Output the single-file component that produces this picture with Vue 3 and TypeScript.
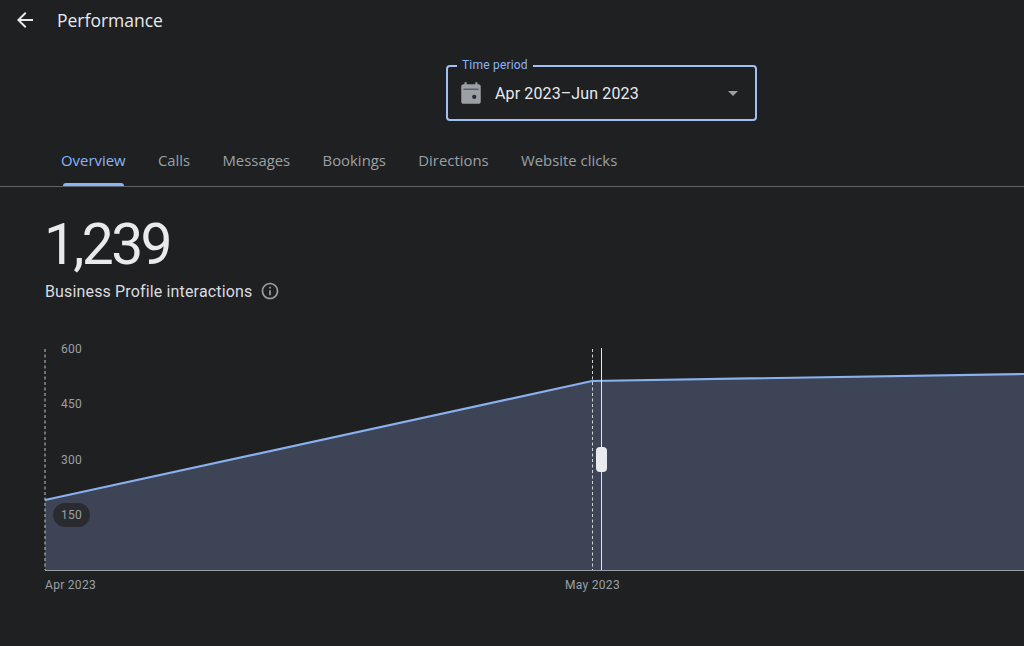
<script setup lang="ts">
const tabs: string[] = ['Overview', 'Calls', 'Messages', 'Bookings', 'Directions', 'Website clicks']
const yTicks = [
  { label: '600', y: 353 },
  { label: '450', y: 408 },
  { label: '300', y: 464 },
]
</script>

<template>
  <div class="page">
    <header class="top">
      <svg class="back" width="24" height="24" viewBox="0 0 24 24" fill="#e8eaed"><path d="M20 11H7.83l5.59-5.59L12 4l-8 8 8 8 1.41-1.41L7.83 13H20z"/></svg>
      <h1>Performance</h1>
    </header>

    <div class="period-row">
      <div class="period">
        <span class="legend">Time period</span>
        <svg class="cal" width="26" height="26" viewBox="0 0 24 24"><path fill="#9aa0a6" d="M19 4h-1V2h-2v2H8V2H6v2H5c-1.1 0-2 .9-2 2v14c0 1.1.9 2 2 2h14c1.1 0 2-.9 2-2V6c0-1.1-.9-2-2-2z"/><path fill="#1f2022" d="M5 8h14v1H5z" opacity=".7"/><circle cx="15" cy="15.5" r="2" fill="#2c2d30"/></svg>
        <span class="value">Apr 2023–Jun 2023</span>
        <span class="caret"></span>
      </div>
    </div>

    <nav class="tabs">
      <span v-for="(t, i) in tabs" :key="t" class="tab" :class="{ active: i === 0 }">{{ t }}</span>
    </nav>

    <section class="summary">
      <div class="big">1,239</div>
      <div class="sub">
        <span>Business Profile interactions</span>
        <svg width="20" height="20" viewBox="0 0 24 24" fill="#9aa0a6"><path d="M11 7h2v2h-2zm0 4h2v6h-2zm1-9C6.48 2 2 6.48 2 12s4.48 10 10 10 10-4.48 10-10S17.52 2 12 2zm0 18c-4.41 0-8-3.59-8-8s3.59-8 8-8 8 3.59 8 8-3.59 8-8 8z"/></svg>
      </div>
    </section>

    <svg class="chart" width="1024" height="260" viewBox="0 340 1024 260">
      <path d="M45 500 L592 381 L1024 374 V570 H45 Z" fill="#3c4456"/>
      <path d="M45 500 L592 381 L1024 374" fill="none" stroke="#8ab0ee" stroke-width="2.2"/>
      <line x1="45" y1="349" x2="45" y2="570" stroke="#c4c7cc" stroke-width="1" stroke-dasharray="3 2.5"/>
      <line x1="592.5" y1="349" x2="592.5" y2="570" stroke="#d0d3d8" stroke-width="1" stroke-dasharray="3 2.5"/>
      <line x1="601.5" y1="348" x2="601.5" y2="570" stroke="#e3e5e8" stroke-width="1"/>
      <line x1="45" y1="570.5" x2="1024" y2="570.5" stroke="#9aa0a6" stroke-width="1"/>
      <rect x="596" y="447" width="11" height="25" rx="4" fill="#e8eaed"/>
      <rect x="53" y="503" width="37" height="24" rx="12" fill="#2a2b2e"/>
      <text v-for="t in yTicks" :key="t.label" x="61" :y="t.y" class="tick">{{ t.label }}</text>
      <text x="61" y="519" class="tick">150</text>
      <text x="45" y="589" class="tick">Apr 2023</text>
      <text x="565" y="589" class="tick">May 2023</text>
    </svg>
  </div>
</template>

<style>
html, body { margin: 0; background: #1f2022; }
</style>

<style scoped>
.page {
  width: 1024px;
  height: 646px;
  overflow: hidden;
  background: #1f2022;
  color: #e8eaed;
  font-family: Roboto, "Liberation Sans", sans-serif;
  display: flex;
  flex-direction: column;
}
.top {
  height: 40px;
  display: flex;
  align-items: center;
  padding-left: 13px;
  gap: 20px;
}
.back { flex: none; }
h1 {
  margin: 0;
  font-family: "Open Sans", Roboto, sans-serif;
  font-weight: 400;
  font-size: 17.5px;
  color: #e8eaed;
}
.period-row {
  padding: 25px 0 0 446px;
}
.period {
  position: relative;
  box-sizing: border-box;
  width: 311px;
  height: 56px;
  border: 2px solid #a0c0f5;
  border-radius: 4px;
  display: flex;
  align-items: center;
  padding-left: 10px;
}
.legend {
  position: absolute;
  left: 9px;
  top: -10px;
  padding: 0 5px;
  background: #1f2022;
  color: #8ab4f8;
  font-size: 12px;
  line-height: 16px;
  letter-spacing: 0.2px;
}
.cal { flex: none; }
.value {
  margin-left: 11px;
  font-size: 16px;
  letter-spacing: 0.12px;
  color: #e8eaed;
}
.caret {
  position: absolute;
  right: 17px;
  top: 24px;
  border-left: 5px solid transparent;
  border-right: 5px solid transparent;
  border-top: 5px solid #9aa0a6;
}
.tabs {
  margin-top: 19px;
  height: 47px;
  box-sizing: border-box;
  border-bottom: 1px solid #5f6368;
  padding: 11px 0 0 61px;
  display: flex;
  gap: 32.3px;
}
.tab {
  position: relative;
  font-family: "Open Sans", Roboto, sans-serif;
  font-size: 14.9px;
  font-weight: 500;
  line-height: 18px;
  color: #9aa0a6;
}
.tab.active { color: #8ab4f8; }
.tab.active::after {
  content: "";
  position: absolute;
  left: 2px;
  right: 2px;
  bottom: 0;
  height: 3px;
  border-radius: 3px 3px 0 0;
  background: #8ab4f8;
}
.summary {
  padding: 25px 0 0 45px;
}
.big {
  margin-left: -1px;
  font-size: 57px;
  font-weight: 400;
  line-height: 66px;
  letter-spacing: -2.7px;
  color: #e8eaed;
}
.sub {
  margin-top: 3px;
  display: flex;
  align-items: center;
  gap: 8px;
  font-size: 16px;
  letter-spacing: 0.15px;
  color: #dadce0;
}
.chart {
  display: block;
  margin-top: 39px;
  flex: none;
}
.tick {
  font-family: Roboto, sans-serif;
  font-size: 12px;
  letter-spacing: 0.3px;
  fill: #9aa0a6;
}
</style>
